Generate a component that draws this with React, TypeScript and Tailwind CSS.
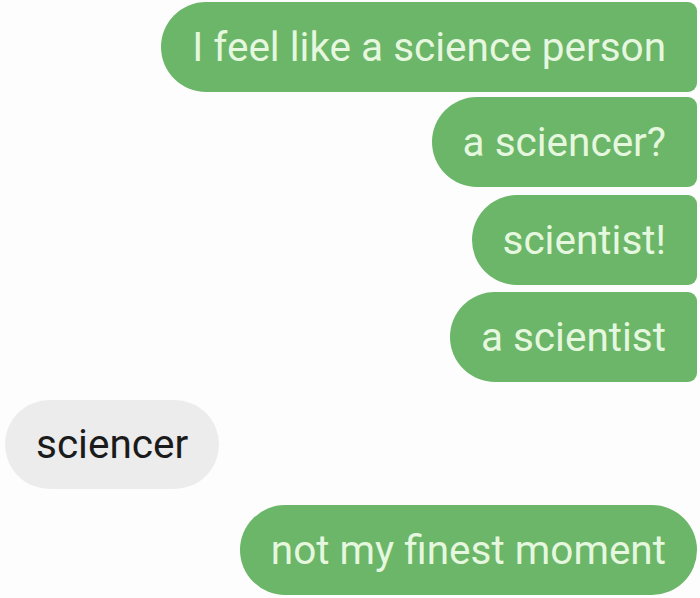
import React from "react";

const font = { fontFamily: "Roboto, 'Noto Sans', sans-serif" };

function Sent({ text, full, mt }: { text: string; full?: boolean; mt: string }) {
  return (
    <div
      className={`${mt} mr-[3px] h-[90px] flex items-center px-[31px] bg-[#6bb668] text-[#e6f7df] text-[40.5px] leading-none ${
        full ? "rounded-[45px]" : "rounded-l-[45px] rounded-r-[9px]"
      }`}
    >
      {text}
    </div>
  );
}

export default function App() {
  return (
    <div className="w-[700px] h-[598px] bg-[#fdfdfd] overflow-hidden flex flex-col" style={font}>
      <div className="flex flex-col items-end">
        <Sent mt="mt-[2px]" text="I feel like a science person" />
        <Sent mt="mt-[5px]" text="a sciencer?" />
        <Sent mt="mt-[8px]" text="scientist!" />
        <Sent mt="mt-[7px]" text="a scientist" />
      </div>
      <div className="flex mt-[18px]">
        <div className="ml-[5px] h-[89px] flex items-center px-[31px] rounded-[45px] bg-[#ececec] text-[#1b1b1b] text-[40.5px] leading-none">
          sciencer
        </div>
      </div>
      <div className="flex flex-col items-end mt-[16px]">
        <Sent mt="mt-0" full text="not my finest moment" />
      </div>
    </div>
  );
}
